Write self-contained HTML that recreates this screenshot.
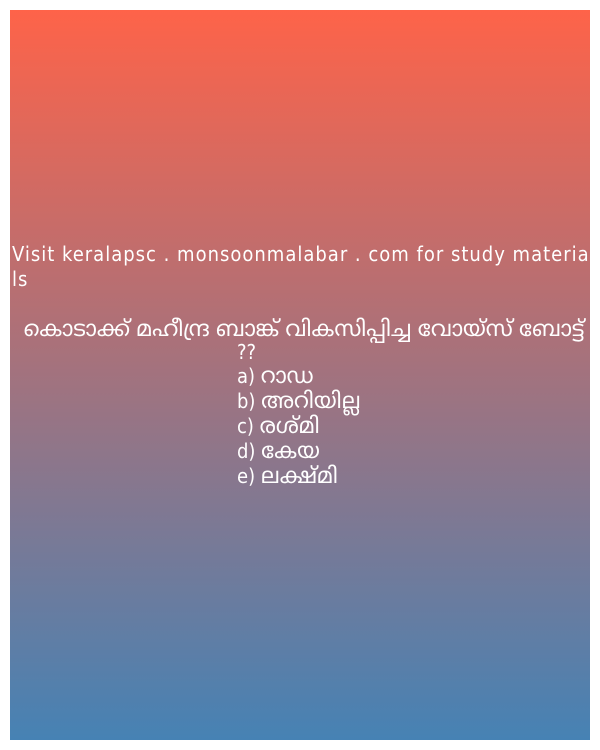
<!DOCTYPE html>
<html><head><meta charset="utf-8"><style>
html,body{margin:0;padding:0;background:#fff;width:600px;height:750px;overflow:hidden}
.box{position:absolute;left:10px;top:10px;width:580px;height:730px;background:linear-gradient(to bottom,#fe6349,#4682b4);}
.t{position:absolute;color:#fff;font-family:"DejaVu Sans Condensed","DejaVu Sans","Noto Sans Malayalam",sans-serif;font-size:20px;line-height:25px;white-space:nowrap}
.m{font-size:22px}
</style></head><body>
<div class="box"></div>
<div class="t" style="left:12px;top:242px;letter-spacing:1px">Visit keralapsc . monsoonmalabar . com for study materia<br>ls</div>
<div class="t m" style="left:10px;top:317px;width:580px;text-align:center;padding-left:8px;box-sizing:border-box">കൊടാക്ക് മഹീന്ദ്ര ബാങ്ക് വികസിപ്പിച്ച വോയ്സ് ബോട്ട്</div>
<div class="t" style="left:237px;top:340px">??</div>
<div class="t" style="left:237px;top:364px">a) <span class="m">റാഡ</span><br>b) <span class="m">അറിയില്ല</span><br>c) <span class="m">രശ്മി</span><br>d) <span class="m">കേയ</span><br>e) <span class="m">ലക്ഷ്മി</span></div>
</body></html>
